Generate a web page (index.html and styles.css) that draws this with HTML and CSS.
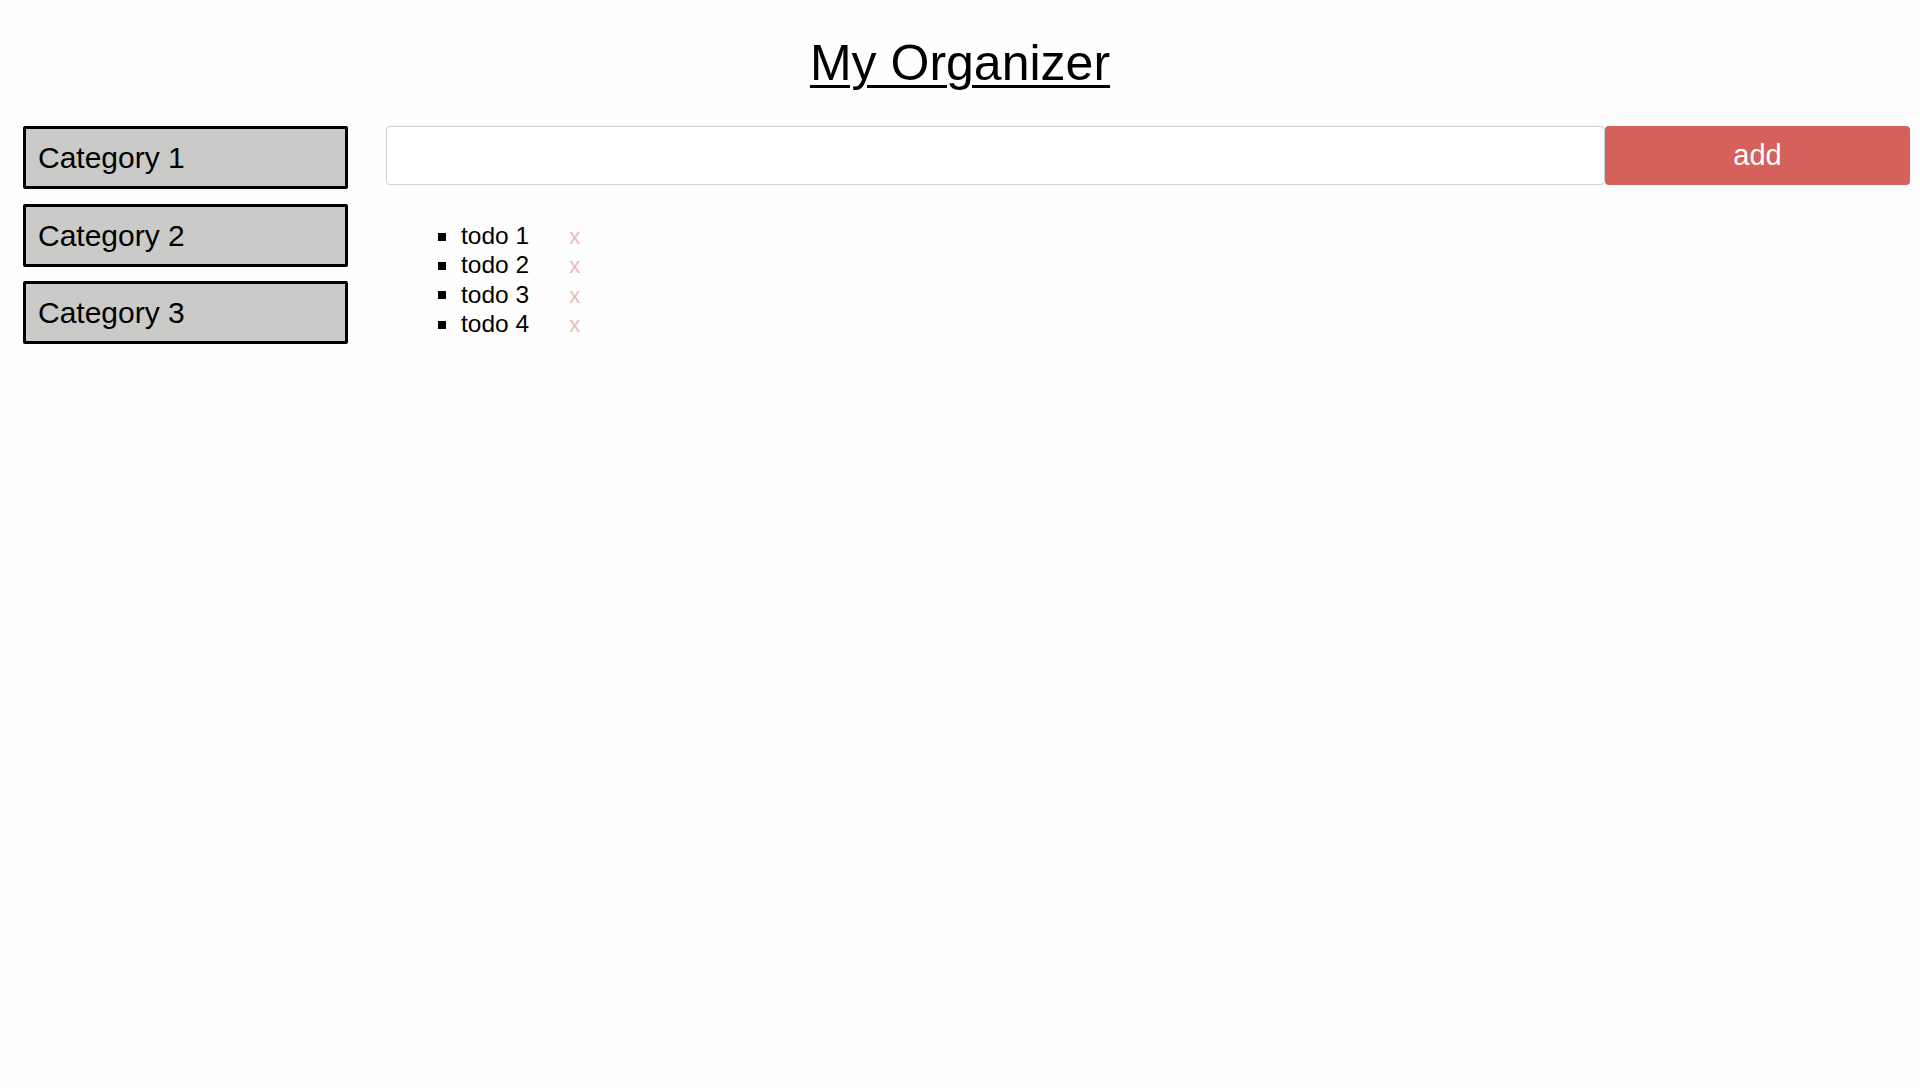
FILE: index.html
```html
<!DOCTYPE html>
<html>
<head>
<meta charset="utf-8">
<title>My Organizer</title>
<link rel="stylesheet" href="styles.css">
</head>
<body>
<h1 class="title">My Organizer</h1>
<div class="main">
  <div class="sidebar">
    <div class="category">Category 1</div>
    <div class="category">Category 2</div>
    <div class="category">Category 3</div>
  </div>
  <div class="content">
    <div class="add-row">
      <input class="todo-input" type="text">
      <button class="add-btn">add</button>
    </div>
    <ul class="todo-list">
      <li class="todo"><span class="todo-text">todo 1</span><span class="remove">x</span></li>
      <li class="todo"><span class="todo-text">todo 2</span><span class="remove">x</span></li>
      <li class="todo"><span class="todo-text">todo 3</span><span class="remove">x</span></li>
      <li class="todo"><span class="todo-text">todo 4</span><span class="remove">x</span></li>
    </ul>
  </div>
</div>
</body>
</html>
```
FILE: styles.css
```css
html, body {
  margin: 0;
  padding: 0;
  background: #fefefe;
  font-family: "Liberation Sans", Arial, sans-serif;
  color: #000;
}

.title {
  margin: 0;
  padding-top: 34px;
  font-size: 50px;
  line-height: 58px;
  font-weight: normal;
  text-align: center;
  text-decoration: underline;
  text-decoration-thickness: 3px;
  text-underline-offset: 5px;
}

.main {
  display: flex;
  gap: 38px;
  margin-top: 34px;
  padding: 0 10px 0 23px;
}

.sidebar {
  width: 325px;
  flex: none;
  display: flex;
  flex-direction: column;
  gap: 14.5px;
}

.category {
  box-sizing: border-box;
  height: 63px;
  border: 3px solid #000;
  border-radius: 2px;
  background: #cacac8;
  padding-left: 12px;
  font-size: 30px;
  line-height: 57px;
}

.content {
  flex: 1;
  min-width: 0;
}

.add-row {
  display: flex;
}

.todo-input {
  flex: 1;
  min-width: 0;
  box-sizing: border-box;
  height: 59px;
  border: 1px solid #cfcfcf;
  border-radius: 4px;
  background: #fff;
  margin: 0;
  outline: none;
}

.add-btn {
  width: 305px;
  height: 59px;
  margin: 0;
  border: none;
  border-radius: 4px;
  background: #d6605a;
  color: #fff;
  font-family: "Liberation Sans", Arial, sans-serif;
  font-size: 29px;
}

.todo-list {
  list-style: none;
  margin: 36px 0 0 0;
  padding: 0 0 0 52px;
}

.todo {
  display: flex;
  align-items: baseline;
  height: 29.4px;
  font-size: 24.5px;
  line-height: 29.4px;
}

.todo::before {
  content: "";
  width: 8px;
  height: 8px;
  background: #000;
  margin-right: 15px;
  align-self: center;
  position: relative;
  top: 1px;
}

.remove {
  margin-left: 40px;
  color: #f0b6b6;
  font-size: 22px;
  line-height: 20px;
}
```
